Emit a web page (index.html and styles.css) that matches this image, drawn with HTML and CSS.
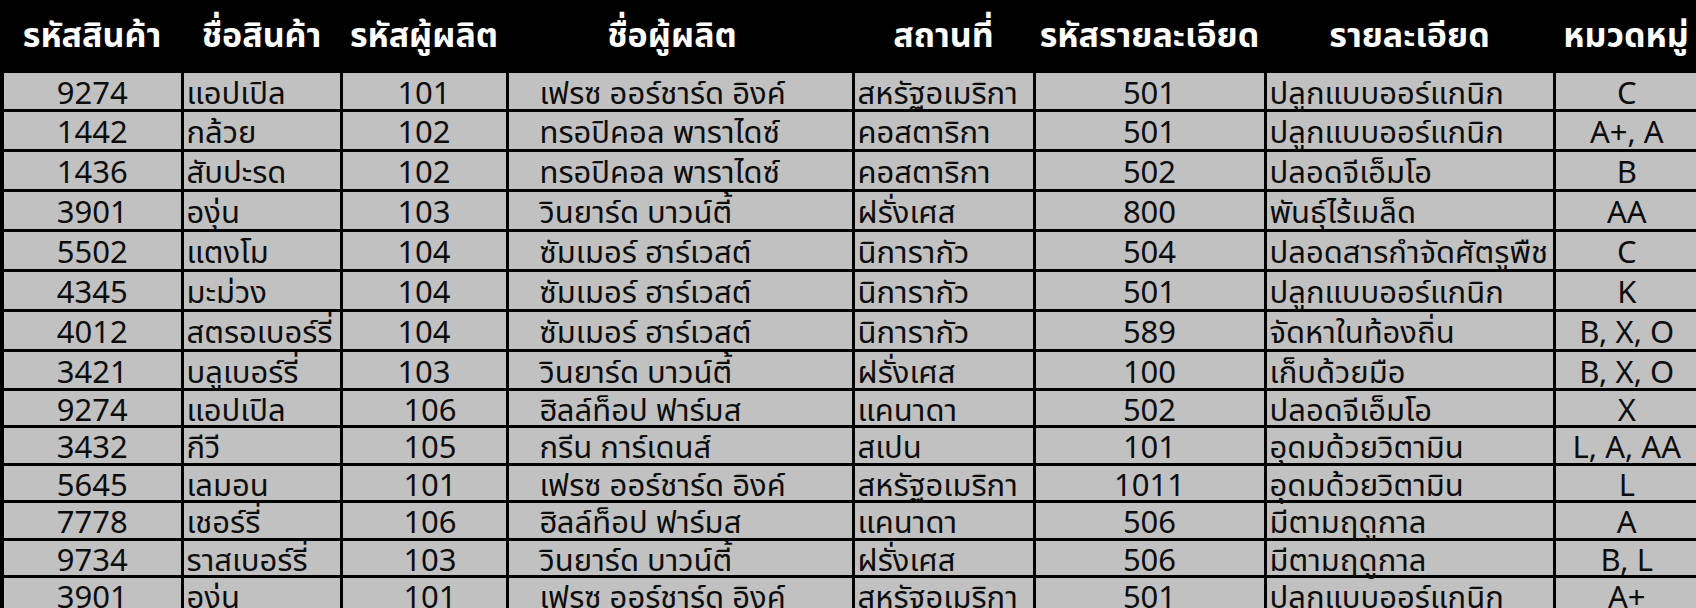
FILE: index.html
```html
<!DOCTYPE html>
<html lang="th">
<head>
<meta charset="utf-8">
<title>ตารางสินค้า</title>
<link rel="stylesheet" href="styles.css">
</head>
<body>
<table class="grid">
  <colgroup>
    <col class="c1"><col class="c2"><col class="c3"><col class="c4"><col class="c5"><col class="c6"><col class="c7"><col class="c8">
  </colgroup>
  <thead>
    <tr>
      <th>รหัสสินค้า</th><th>ชื่อสินค้า</th><th>รหัสผู้ผลิต</th><th class="shift-left">ชื่อผู้ผลิต</th><th>สถานที่</th><th>รหัสรายละเอียด</th><th>รายละเอียด</th><th>หมวดหมู่</th>
    </tr>
  </thead>
  <tbody>
    <tr><td>9274</td><td>แอปเปิล</td><td>101</td><td>เฟรซ ออร์ชาร์ด อิงค์</td><td>สหรัฐอเมริกา</td><td>501</td><td>ปลูกแบบออร์แกนิก</td><td>C</td></tr>
    <tr><td>1442</td><td>กล้วย</td><td>102</td><td>ทรอปิคอล พาราไดซ์</td><td>คอสตาริกา</td><td>501</td><td>ปลูกแบบออร์แกนิก</td><td>A+, A</td></tr>
    <tr><td>1436</td><td>สับปะรด</td><td>102</td><td>ทรอปิคอล พาราไดซ์</td><td>คอสตาริกา</td><td>502</td><td>ปลอดจีเอ็มโอ</td><td>B</td></tr>
    <tr><td>3901</td><td>องุ่น</td><td>103</td><td>วินยาร์ด บาวน์ตี้</td><td>ฝรั่งเศส</td><td>800</td><td>พันธุ์ไร้เมล็ด</td><td>AA</td></tr>
    <tr><td>5502</td><td>แตงโม</td><td>104</td><td>ซัมเมอร์ ฮาร์เวสต์</td><td>นิการากัว</td><td>504</td><td>ปลอดสารกำจัดศัตรูพืช</td><td>C</td></tr>
    <tr><td>4345</td><td>มะม่วง</td><td>104</td><td>ซัมเมอร์ ฮาร์เวสต์</td><td>นิการากัว</td><td>501</td><td>ปลูกแบบออร์แกนิก</td><td>K</td></tr>
    <tr><td>4012</td><td>สตรอเบอร์รี่</td><td>104</td><td>ซัมเมอร์ ฮาร์เวสต์</td><td>นิการากัว</td><td>589</td><td>จัดหาในท้องถิ่น</td><td>B, X, O</td></tr>
    <tr><td>3421</td><td>บลูเบอร์รี่</td><td>103</td><td>วินยาร์ด บาวน์ตี้</td><td>ฝรั่งเศส</td><td>100</td><td>เก็บด้วยมือ</td><td>B, X, O</td></tr>
    <tr><td>9274</td><td>แอปเปิล</td><td>106</td><td>ฮิลล์ท็อป ฟาร์มส</td><td>แคนาดา</td><td>502</td><td>ปลอดจีเอ็มโอ</td><td>X</td></tr>
    <tr><td>3432</td><td>กีวี</td><td>105</td><td>กรีน การ์เดนส์</td><td>สเปน</td><td>101</td><td>อุดมด้วยวิตามิน</td><td>L, A, AA</td></tr>
    <tr><td>5645</td><td>เลมอน</td><td>101</td><td>เฟรซ ออร์ชาร์ด อิงค์</td><td>สหรัฐอเมริกา</td><td>1011</td><td>อุดมด้วยวิตามิน</td><td>L</td></tr>
    <tr><td>7778</td><td>เชอร์รี่</td><td>106</td><td>ฮิลล์ท็อป ฟาร์มส</td><td>แคนาดา</td><td>506</td><td>มีตามฤดูกาล</td><td>A</td></tr>
    <tr><td>9734</td><td>ราสเบอร์รี่</td><td>103</td><td>วินยาร์ด บาวน์ตี้</td><td>ฝรั่งเศส</td><td>506</td><td>มีตามฤดูกาล</td><td>B, L</td></tr>
    <tr><td>3901</td><td>องุ่น</td><td>101</td><td>เฟรซ ออร์ชาร์ด อิงค์</td><td>สหรัฐอเมริกา</td><td>501</td><td>ปลูกแบบออร์แกนิก</td><td>A+</td></tr>
  </tbody>
</table>
</body>
</html>
```
FILE: styles.css
```css
html, body {
  margin: 0;
  padding: 0;
  background: #000;
  overflow: hidden;
}

.grid {
  border-collapse: collapse;
  table-layout: fixed;
  width: 1696px;
  font-family: "Noto Sans", "Noto Sans Thai", "Leelawadee UI", Tahoma, sans-serif;
  color: #0d0d0d;
}

.c1 { width: 180px; }
.c2 { width: 159px; }
.c3 { width: 166px; }
.c4 { width: 346px; }
.c5 { width: 181px; }
.c6 { width: 231px; }
.c7 { width: 289px; }
.c8 { width: 144px; }

.grid th {
  background: #000;
  color: #fff;
  font-weight: 700;
  font-size: 34px;
  line-height: 1;
  height: 71px;
  box-sizing: border-box;
  padding: 0 0 2px;
  text-align: center;
  vertical-align: middle;
  white-space: nowrap;
  border: none;
}

.grid th.shift-left { padding-right: 16px; }

.grid td {
  background: #c1c1c1;
  border: 3px solid #000;
  font-size: 31px;
  line-height: 1;
  padding: 3px 0 0;
  height: 39px;
  box-sizing: border-box;
  white-space: nowrap;
  text-align: center;
  vertical-align: middle;
}

.grid td:nth-child(1) { border-left-width: 4px; }

.grid td:nth-child(2),
.grid td:nth-child(5),
.grid td:nth-child(7) {
  text-align: left;
  padding-left: 3px;
}

.grid td:nth-child(4) {
  text-align: left;
  padding-left: 31px;
}

.grid td:nth-child(8) { border-right: none; }

.grid tbody tr:nth-child(n+2):nth-child(-n+7) td { height: 40px; }
.grid tbody tr:nth-child(n+9) td { height: 37.5px; }
.grid tbody tr:nth-child(n+9) td:nth-child(3) { padding-left: 12px; }
```
